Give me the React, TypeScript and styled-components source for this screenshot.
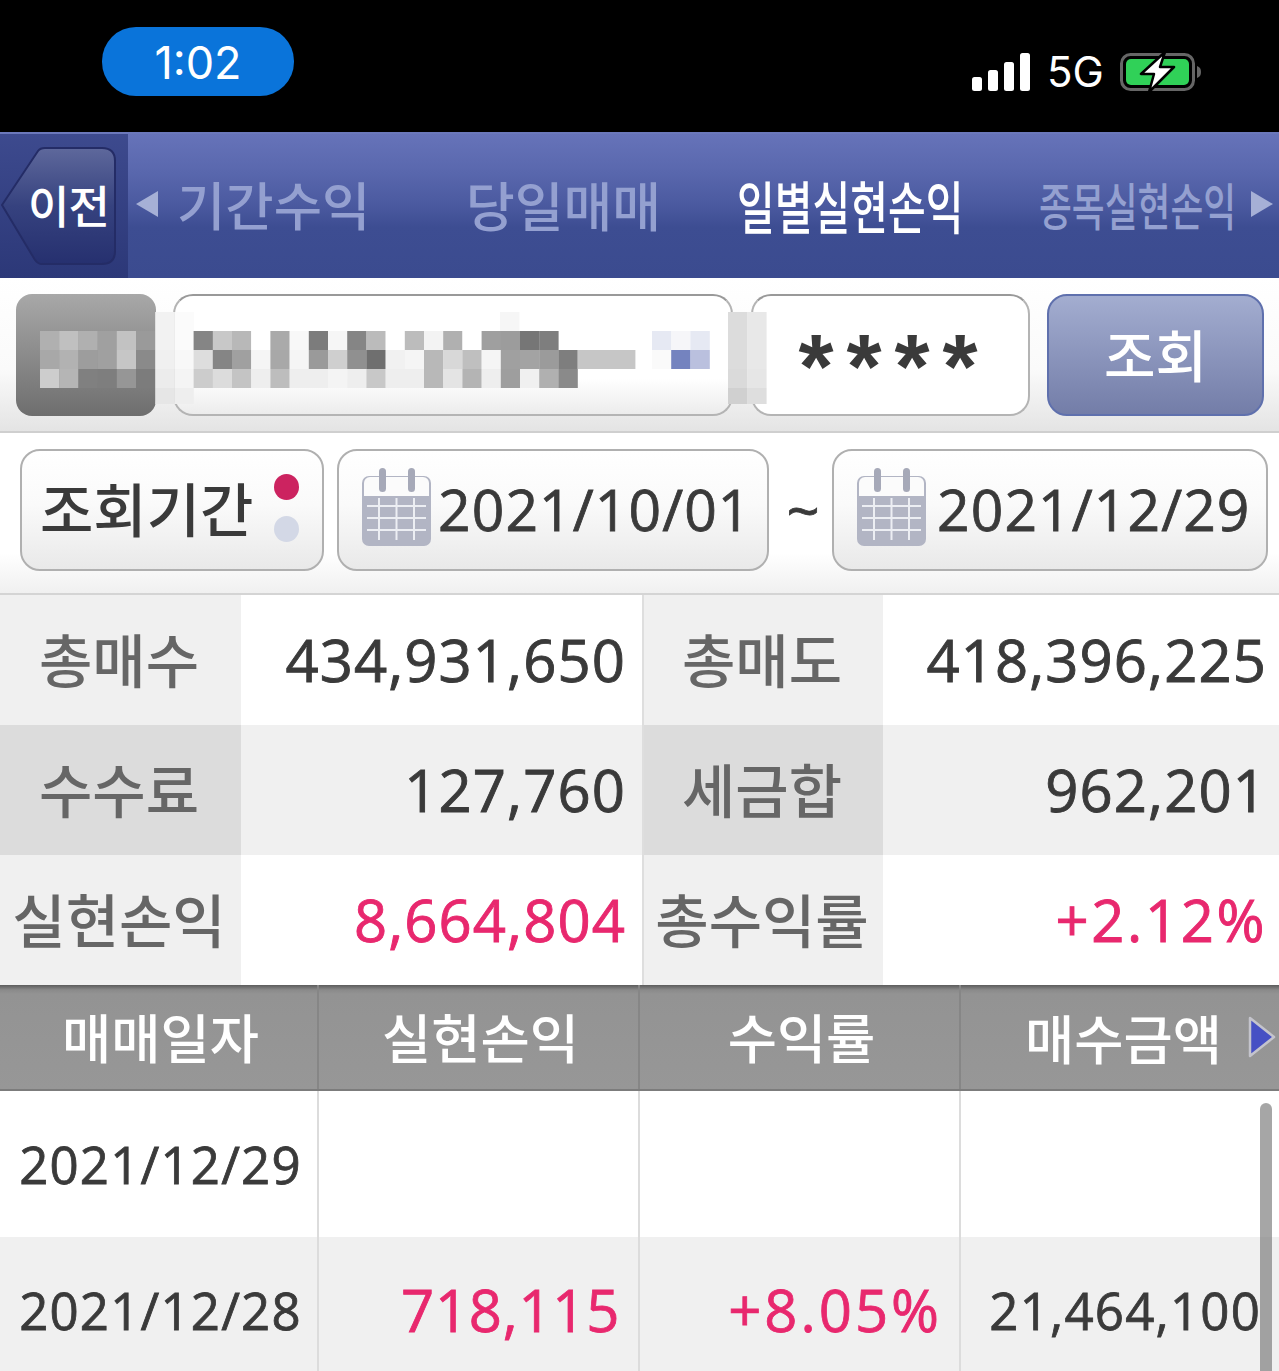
import React from "react";
import styled, { createGlobalStyle } from "styled-components";

const GlobalStyle = createGlobalStyle`
  html, body {
    margin: 0;
    padding: 0;
    background: #fff;
  }
  body {
    font-family: "Noto Sans CJK KR", "Open Sans", sans-serif;
  }
`;

const KR = `"Noto Sans CJK KR", sans-serif`;
const NUM = `"Open Sans", "Noto Sans CJK KR", sans-serif`;

const Page = styled.div`
  position: relative;
  width: 1279px;
  height: 1371px;
  overflow: hidden;
  background: #fff;
`;

/* status bar */
const StatusBar = styled.div`
  height: 132px;
  background: #000;
  display: flex;
  justify-content: space-between;
  box-sizing: border-box;
  padding: 27px 77px 0 102px;
`;
const TimePill = styled.div`
  width: 192px;
  height: 69px;
  border-radius: 34px;
  background: #0a74da;
  color: #fff;
  font: 400 45px/71px Inter, sans-serif;
  text-align: center;
`;
const StatusIcons = styled.div`
  display: flex;
  align-items: center;
  height: 66px;
  margin-top: 12px;
`;
const NetLabel = styled.span`
  color: #fff;
  font: 400 42px/1 Inter, sans-serif;
  margin: 0 19px 0 16px;
  width: 54px;
`;

/* nav */
const Nav = styled.div`
  height: 146px;
  display: flex;
  background: linear-gradient(#6673b9 0, #5a68ae 25%, #4a599f 50%, #3d4d92 65%, #3b4b8f 100%);
  border-top: 2px solid #6b78bb;
  box-sizing: border-box;
`;
const BackCell = styled.div`
  position: relative;
  width: 128px;
  flex: none;
  background: linear-gradient(#3d4a8e, #2c3878);
  display: flex;
  align-items: center;
`;
const BackText = styled.span`
  position: relative;
  margin: 0 0 3px 28px;
  color: #fff;
  font: 500 45px/1 ${KR};
  letter-spacing: -1px;
`;
const BackShape = styled.svg`
  position: absolute;
  left: 0;
  top: 13px;
`;
const TabRow = styled.div`
  flex: 1;
  display: flex;
  align-items: center;
  min-width: 0;
  padding-bottom: 4px;
`;
const Tab = styled.span<{ $w: number; $ml: number; $sx: number; $size: number; $on?: boolean }>`
  display: block;
  flex: none;
  width: ${(p) => p.$w}px;
  margin-left: ${(p) => p.$ml}px;
  font: 500 ${(p) => p.$size}px/1 ${KR};
  color: ${(p) => (p.$on ? "#fff" : "#94a0d0")};
  white-space: nowrap;
  transform: scaleX(${(p) => p.$sx});
  transform-origin: left center;
`;
const TabArrow = styled.svg<{ $ml: number }>`
  flex: none;
  margin-left: ${(p) => p.$ml}px;
`;

/* query rows */
const AccountRow = styled.div`
  height: 155px;
  box-sizing: border-box;
  padding: 16px 15px 0 16px;
  display: flex;
  background: linear-gradient(#fff 0, #fafafa 60%, #e4e4e4 100%);
  border-bottom: 2px solid #cfcfcf;
`;
const GrayBox = styled.div`
  width: 140px;
  height: 122px;
  border-radius: 16px;
  background: linear-gradient(#a8a8a8, #6e6e6e);
  flex: none;
`;
const Field = styled.div<{ $w: number; $ml: number }>`
  width: ${(p) => p.$w}px;
  margin-left: ${(p) => p.$ml}px;
  height: 122px;
  box-sizing: border-box;
  flex: none;
  border: 2px solid #b4b4b4;
  border-top-color: #999;
  border-radius: 20px;
  background: linear-gradient(#fff 0, #fff 70%, #ececec 100%);
  display: flex;
  align-items: center;
  justify-content: center;
`;
const PasswordField = styled(Field)`
  background: #fff;
`;
const Stars = styled.span`
  font: 700 90px/1 "Liberation Sans", sans-serif;
  color: #3a3a3a;
  letter-spacing: 13px;
  margin: 24px 0 0 8px;
`;
const QueryButton = styled.div`
  width: 217px;
  height: 122px;
  margin-left: 17px;
  flex: none;
  box-sizing: border-box;
  border: 2px solid #5f70ad;
  border-radius: 20px;
  background: linear-gradient(#a3add0, #737da8);
  color: #fff;
  font: 500 56px/114px ${KR};
  text-align: center;
`;
const PeriodRow = styled.div`
  height: 162px;
  box-sizing: border-box;
  padding: 16px 11px 0 20px;
  display: flex;
  background: linear-gradient(#fff 0, #fff 75%, #f0f0f0 100%);
  border-bottom: 2px solid #d4d4d4;
`;
const Pill = styled.div<{ $w: number; $ml?: number }>`
  width: ${(p) => p.$w}px;
  margin-left: ${(p) => p.$ml ?? 0}px;
  height: 122px;
  box-sizing: border-box;
  flex: none;
  border: 2px solid #b0b0b0;
  border-radius: 20px;
  background: linear-gradient(#fff 0, #fafafa 45%, #e9e9e9 100%);
  display: flex;
  align-items: center;
  color: #3a3a3a;
`;
const PeriodLabel = styled.span`
  font: 500 58px/1 ${KR};
  margin: -6px 0 0 18px;
  white-space: nowrap;
`;
const Dots = styled.div`
  display: flex;
  flex-direction: column;
  gap: 16px;
  margin: -4px 0 0 21px;
`;
const Dot = styled.span<{ $c: string }>`
  display: block;
  width: 25px;
  height: 26px;
  border-radius: 50%;
  background: ${(p) => p.$c};
`;
const DateText = styled.span<{ $ml: number }>`
  font: 400 57px/1 ${NUM};
  -webkit-text-stroke: 0.8px #3a3a3a;
  letter-spacing: 1.1px;
  margin: -2px 0 0 ${(p) => p.$ml}px;
  white-space: nowrap;
`;
const CalendarIcon = styled.svg`
  flex: none;
  margin-left: 23px;
  margin-top: -6px;
`;
const Tilde = styled.span`
  flex: none;
  width: 63px;
  padding-left: 5px;
  box-sizing: border-box;
  text-align: center;
  font: 400 58px/122px ${NUM};
  -webkit-text-stroke: 0.8px #3a3a3a;
  color: #3a3a3a;
`;

/* summary table */
const Summary = styled.div`
  display: grid;
  grid-template-columns: 241px 401px 241px 396px;
  grid-auto-rows: 130px;
`;
const SumLabel = styled.div<{ $alt?: boolean; $sep?: boolean }>`
  background: ${(p) => (p.$alt ? "#dcdcdc" : "#f0f0f0")};
  ${(p) => p.$sep && "border-left: 2px solid #dedede;"}
  box-sizing: border-box;
  padding-right: 3px;
  color: #666;
  font: 500 58px/126px ${KR};
  text-align: center;
  white-space: nowrap;
`;
const SumValue = styled.div<{ $alt?: boolean; $red?: boolean; $sp?: number; $pr?: number }>`
  background: ${(p) => (p.$alt ? "#f0f0f0" : "#fff")};
  color: ${(p) => (p.$red ? "#e8286e" : "#3a3a3a")};
  font: 400 58px/130px ${NUM};
  -webkit-text-stroke: 0.9px ${(p) => (p.$red ? "#e8286e" : "#3a3a3a")};
  letter-spacing: ${(p) => p.$sp ?? 1.1}px;
  text-align: right;
  padding-right: ${(p) => p.$pr ?? 16}px;
`;

/* list */
const HeadRow = styled.div`
  height: 106px;
  display: grid;
  grid-template-columns: 317px 321px 321px 320px;
  background: linear-gradient(#5c5c5c 0, #8a8a8a 5px, #939393 9px, #979797 100%);
  border-bottom: 2px solid #7c7c7c;
  box-sizing: border-box;
`;
const HeadCell = styled.div<{ $first?: boolean }>`
  color: #fff;
  font: 500 53.500px/102px ${KR};
  text-align: center;
  box-sizing: border-box;
  padding-left: 4px;
  ${(p) => !p.$first && "border-left: 2px solid #868686;"}
  white-space: nowrap;
`;
const LastHead = styled(HeadCell)`
  display: flex;
  align-items: center;
  padding-left: 64px;
`;
const DataRow = styled.div<{ $h: number; $alt?: boolean }>`
  height: ${(p) => p.$h}px;
  display: grid;
  grid-template-columns: 317px 321px 321px 320px;
  background: ${(p) => (p.$alt ? "#f0f0f0" : "#fff")};
`;
const DataCell = styled.div<{ $first?: boolean; $red?: boolean; $pad?: number; $sp?: number }>`
  box-sizing: border-box;
  ${(p) => !p.$first && "border-left: 2px solid #dcdcdc;"}
  color: ${(p) => (p.$red ? "#e8286e" : "#3a3a3a")};
  font: 400 ${(p) => (p.$red ? 58 : 51)}px/146px ${NUM};
  -webkit-text-stroke: 0.8px ${(p) => (p.$red ? "#e8286e" : "#3a3a3a")};
  letter-spacing: ${(p) => p.$sp ?? 1.2}px;
  text-align: ${(p) => (p.$first ? "center" : "right")};
  padding-left: ${(p) => (p.$first ? 4 : 0)}px;
  padding-right: ${(p) => p.$pad ?? 0}px;
  white-space: nowrap;
`;
const ScrollThumb = styled.div`
  position: absolute;
  left: 1260px;
  top: 1103px;
  width: 12px;
  height: 280px;
  border-radius: 6px;
  background: rgba(120, 120, 120, 0.66);
`;
const Mosaic = styled.svg`
  position: absolute;
  left: 0;
  top: 0;
  pointer-events: none;
`;

const STEP = 19.2;
const BLOCKS: [number, number, string[]][] = [
  // [x, y, colours]: rows of the pixelated account number
  [40, 331, ["#b0b0b0", "#c0c0c0", "#b0b0b0", "#a0a0a0", "#c2c2c2", "#9a9a9a"]],
  [40, 350, ["#a8a8a8", "#b2b2b2", "#9d9d9d", "#a0a0a0", "#c6c6c6", "#8a8a8a"]],
  [40, 369, ["#cdcdcd", "#b5b5b5", "#808080", "#7e7e7e", "#969696", "#7c7c7c"]],
  [155.2, 312, ["#f2f2f2", "#fbfbfb"]],
  [155.2, 331, ["#f2f2f2", "#fbfbfb"]],
  [155.2, 350, ["#f0f0f0", "#f8f8f8"]],
  [155.2, 369, ["#ececec", "#f4f4f4"]],
  [155.2, 388, ["#e6e6e6", "#eeeeee"]],
  [
    193.6,
    331,
    ["#858585", "#c8c8c8", "#b8b8b8", "#fff", "#aaa", "#f8f8f8", "#7c7c7c", "#f6f6f6", "#858585", "#bbb", "#fff", "#bcbcbc", "#f3f3f3", "#b0b0b0", "#fff", "#9f9f9f", "#9c9c9c", "#767676", "#7e7e7e"],
  ],
  [
    193.6,
    350,
    ["#ddd", "#858585", "#a0a0a0", "#f5f5f5", "#a8a8a8", "#f5f5f5", "#9a9a9a", "#cfcfcf", "#909090", "#6f6f6f", "#f1f1f1", "#f5f5f5", "#b8b8b8", "#d8d8d8", "#bfbfbf", "#f5f5f5", "#a0a0a0", "#a3a3a3", "#9b9b9b", "#7e7e7e", "#c6c6c6", "#c6c6c6", "#c6c6c6"],
  ],
  [
    193.6,
    369,
    ["#ccc", "#dcdcdc", "#c4c4c4", "#eee", "#bdbdbd", "#eee", "#eee", "#f4f4f4", "#eee", "#c8c8c8", "#eee", "#eee", "#b8b8b8", "#e4e4e4", "#b4b4b4", "#eee", "#9e9e9e", "#f0f0f0", "#b0b0b0", "#8a8a8a"],
  ],
  [500, 312, ["#f6f6f6"]],
  [652, 331, ["#e6e9f3", "#f6f6f9", "#e6e9f3"]],
  [652, 350, ["#fafafa", "#7483bf", "#bac0de"]],
  [728, 312, ["#dcdcdc", "#e8e8e8"]],
  [728, 331, ["#dcdcdc", "#e8e8e8"]],
  [728, 350, ["#dcdcdc", "#e8e8e8"]],
  [728, 369, ["#dadada", "#e6e6e6"]],
  [728, 388, ["#d0d0d0", "#dedede"]],
];

const Calendar = () => (
  <CalendarIcon width="69" height="78" viewBox="0 0 69 78">
    <rect x="0" y="8" width="69" height="70" rx="7" fill="#b2b5c4" />
    <path d="M2 28 V15 a6 6 0 0 1 6 -6 H61 a6 6 0 0 1 6 6 V28 Z" fill="#fbfbfb" />
    <rect x="17" y="0" width="7" height="24" rx="3.5" fill="#a6a9b8" />
    <rect x="46" y="0" width="7" height="24" rx="3.5" fill="#a6a9b8" />
    <g stroke="#eceef3" strokeWidth="2">
      <path d="M5 38 H64 M5 50 H64 M5 62 H64" />
      <path d="M17 30 V72 M34.500 30 V72 M52 30 V72" />
    </g>
  </CalendarIcon>
);

export default function App() {
  return (
    <Page>
      <GlobalStyle />
      <StatusBar>
        <TimePill>1:02</TimePill>
        <StatusIcons>
          <svg width="59" height="38" viewBox="0 0 59 38" fill="#fff">
            <rect x="0" y="24" width="10" height="14" rx="2.500" />
            <rect x="16" y="17" width="10" height="21" rx="2.500" />
            <rect x="32" y="9" width="10" height="29" rx="2.500" />
            <rect x="48" y="0" width="10" height="38" rx="2.500" />
          </svg>
          <NetLabel>5G</NetLabel>
          <svg width="82" height="42" viewBox="0 0 82 42">
            <rect x="1.500" y="3.500" width="72" height="35" rx="9" fill="none" stroke="#666" strokeWidth="3" />
            <rect x="6" y="8" width="63" height="26" rx="5" fill="#30d158" />
            <path d="M77 15 c3 1 4 3 4 6 s-1 5 -4 6 Z" fill="#666" />
            <path
              d="M45 1 L21 23 H34 L29 41 L54 16 H40 Z"
              fill="#fff"
              stroke="#000"
              strokeWidth="2.500"
              strokeLinejoin="round"
            />
          </svg>
        </StatusIcons>
      </StatusBar>

      <Nav>
        <BackCell>
          <BackShape width="118" height="119" viewBox="0 0 118 119">
            <defs>
              <linearGradient id="backFill" x1="0" y1="0" x2="0" y2="1">
                <stop offset="0" stopColor="#5e689c" />
                <stop offset="0.5" stopColor="#36427f" />
                <stop offset="1" stopColor="#26306f" />
              </linearGradient>
            </defs>
            <path
              d="M2 58 L38 4 Q40 1 45 1 H102 Q115 1 115 14 V104 Q115 117 102 117 H42 Q38 117 35 113 Z"
              fill="url(#backFill)"
              stroke="#242c66"
              strokeWidth="2"
            />
          </BackShape>
          <BackText>이전</BackText>
        </BackCell>
        <TabRow>
          <TabArrow $ml={8} width="22" height="26" viewBox="0 0 22 26">
            <path d="M22 0 V26 L0 13 Z" fill="#a6b0d6" />
          </TabArrow>
          <Tab $ml={19} $w={289} $size={52} $sx={1.01}>
            기간수익
          </Tab>
          <Tab $ml={0} $w={271} $size={53} $sx={1}>
            당일매매
          </Tab>
          <Tab $ml={0} $w={302} $size={57} $sx={0.72} $on>
            일별실현손익
          </Tab>
          <Tab $ml={0} $w={212} $size={51} $sx={0.7}>
            종목실현손익
          </Tab>
          <TabArrow $ml={0} width="22" height="26" viewBox="0 0 22 26">
            <path d="M0 0 V26 L22 13 Z" fill="#a6b0d6" />
          </TabArrow>
        </TabRow>
      </Nav>

      <AccountRow>
        <GrayBox />
        <Field $w={560} $ml={17} />
        <PasswordField $w={279} $ml={18}>
          <Stars>****</Stars>
        </PasswordField>
        <QueryButton>조회</QueryButton>
      </AccountRow>

      <PeriodRow>
        <Pill $w={304}>
          <PeriodLabel>조회기간</PeriodLabel>
          <Dots>
            <Dot $c="#cc2360" />
            <Dot $c="#d3d8e6" />
          </Dots>
        </Pill>
        <Pill $w={432} $ml={13}>
          <Calendar />
          <DateText $ml={7}>2021/10/01</DateText>
        </Pill>
        <Tilde>~</Tilde>
        <Pill $w={436}>
          <Calendar />
          <DateText $ml={11}>2021/12/29</DateText>
        </Pill>
      </PeriodRow>

      <Summary>
        <SumLabel>총매수</SumLabel>
        <SumValue>434,931,650</SumValue>
        <SumLabel $sep>총매도</SumLabel>
        <SumValue $pr={12}>418,396,225</SumValue>
        <SumLabel $alt>수수료</SumLabel>
        <SumValue $alt>127,760</SumValue>
        <SumLabel $alt $sep>
          세금합
        </SumLabel>
        <SumValue $alt $pr={12}>
          962,201
        </SumValue>
        <SumLabel>실현손익</SumLabel>
        <SumValue $red>8,664,804</SumValue>
        <SumLabel $sep>총수익률</SumLabel>
        <SumValue $red $sp={2.6} $pr={12}>
          +2.12%
        </SumValue>
      </Summary>

      <HeadRow>
        <HeadCell $first>매매일자</HeadCell>
        <HeadCell>실현손익</HeadCell>
        <HeadCell>수익률</HeadCell>
        <LastHead>
          매수금액
          <svg width="28" height="44" viewBox="0 0 28 44" style={{ marginLeft: 26, flex: "none" }}>
            <path d="M2 3 L26 22 L2 41 Z" fill="#4650c4" stroke="#c4c4cc" strokeWidth="2.500" strokeLinejoin="round" />
          </svg>
        </LastHead>
      </HeadRow>
      <DataRow $h={146}>
        <DataCell $first>2021/12/29</DataCell>
        <DataCell />
        <DataCell />
        <DataCell />
      </DataRow>
      <DataRow $h={146} $alt>
        <DataCell $first>2021/12/28</DataCell>
        <DataCell $red $pad={18} $sp={0.7}>
          718,115
        </DataCell>
        <DataCell $red $pad={17} $sp={3}>
          +8.05%
        </DataCell>
        <DataCell $pad={18}>21,464,100</DataCell>
      </DataRow>

      <ScrollThumb />
      <Mosaic width="1279" height="1371">
        {BLOCKS.map(([x, y, cells]) =>
          cells.map((c, i) => (
            <rect key={`${x}-${y}-${i}`} x={x + i * STEP} y={y} width={STEP + 0.2} height={y === 388 ? 16 : 19} fill={c} />
          ))
        )}
      </Mosaic>
    </Page>
  );
}
